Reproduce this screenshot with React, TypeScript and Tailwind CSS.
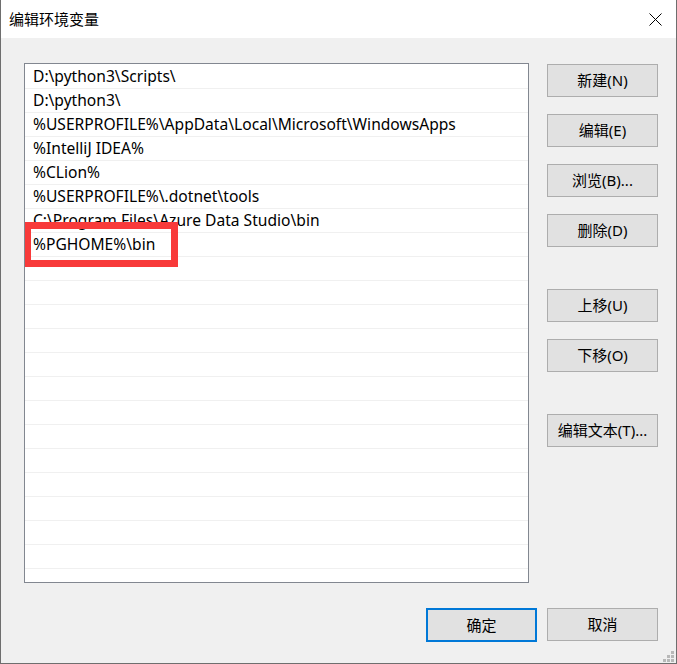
import React from "react";

const paths = [
  "D:\\python3\\Scripts\\",
  "D:\\python3\\",
  "%USERPROFILE%\\AppData\\Local\\Microsoft\\WindowsApps",
  "%IntelliJ IDEA%",
  "%CLion%",
  "%USERPROFILE%\\.dotnet\\tools",
  "C:\\Program Files\\Azure Data Studio\\bin",
  "%PGHOME%\\bin",
];

const ROWS = 21;

const font = { fontFamily: '"Noto Sans", "Noto Sans CJK SC", sans-serif' };

function WinButton({ label, primary = false }: { label: string; primary?: boolean }) {
  return (
    <button
      className={`flex items-center justify-center bg-[#e1e1e1] text-[15px] text-black leading-none ${
        primary ? "h-[34px] w-[111px] border-2 border-[#0078d7]" : "h-[33px] w-[111px] border border-[#adadad]"
      }`}
    >
      {label}
    </button>
  );
}

export default function App() {
  const rows = Array.from({ length: ROWS }, (_, i) => paths[i] ?? "");

  return (
    <div className="relative w-[677px] h-[664px] flex flex-col bg-[#f0f0f0] border-x border-b border-[#6e6e6e]" style={font}>
      {/* title bar */}
      <div className="h-[38px] shrink-0 bg-white flex items-center justify-between pl-[8px] pr-[14px]">
        <span className="text-[15px] text-black">编辑环境变量</span>
        <svg width="13" height="13" viewBox="0 0 13 13" className="text-black">
          <path d="M0.5 0.5 L12.5 12.5 M12.5 0.5 L0.5 12.5" stroke="currentColor" strokeWidth="1" />
        </svg>
      </div>

      <div className="flex-1 flex pl-[23px] pt-[25px]">
        {/* path list */}
        <div className="relative w-[505px] h-[520px] bg-white border border-[#828790] pt-px overflow-hidden">
          {rows.map((p, i) => (
            <div key={i} className="h-6 border-b border-[#f0f0f0] pl-[8px] flex items-center text-[15.6px] text-black whitespace-nowrap">
              {p}
            </div>
          ))}
          {/* red highlight */}
          <div className="absolute left-[-1px] top-[158px] w-[154px] h-[45px] border-[7px] border-[#f83a3a]" />
        </div>

        {/* right buttons */}
        <div className="ml-[18px] flex flex-col pt-px">
          <div className="flex flex-col gap-[17px]">
            <WinButton label="新建(N)" />
            <WinButton label="编辑(E)" />
            <WinButton label="浏览(B)..." />
            <WinButton label="删除(D)" />
          </div>
          <div className="mt-[42px] flex flex-col gap-[17px]">
            <WinButton label="上移(U)" />
            <WinButton label="下移(O)" />
          </div>
          <div className="mt-[42px]">
            <WinButton label="编辑文本(T)..." />
          </div>
        </div>
      </div>

      {/* bottom buttons */}
      <div className="h-[55px] shrink-0 flex justify-end items-start gap-[10px] pr-[18px]">
        <WinButton label="确定" primary />
        <WinButton label="取消" />
      </div>

      {/* size grip */}
      <div className="absolute right-[2px] bottom-[1px] grid grid-cols-3 gap-px">
        <span className="w-[3px] h-[3px]" />
        <span className="w-[3px] h-[3px]" />
        <span className="w-[3px] h-[3px] bg-[#b8b8b8]" />
        <span className="w-[3px] h-[3px]" />
        <span className="w-[3px] h-[3px] bg-[#b8b8b8]" />
        <span className="w-[3px] h-[3px] bg-[#b8b8b8]" />
        <span className="w-[3px] h-[3px] bg-[#b8b8b8]" />
        <span className="w-[3px] h-[3px] bg-[#b8b8b8]" />
        <span className="w-[3px] h-[3px] bg-[#b8b8b8]" />
      </div>
    </div>
  );
}
